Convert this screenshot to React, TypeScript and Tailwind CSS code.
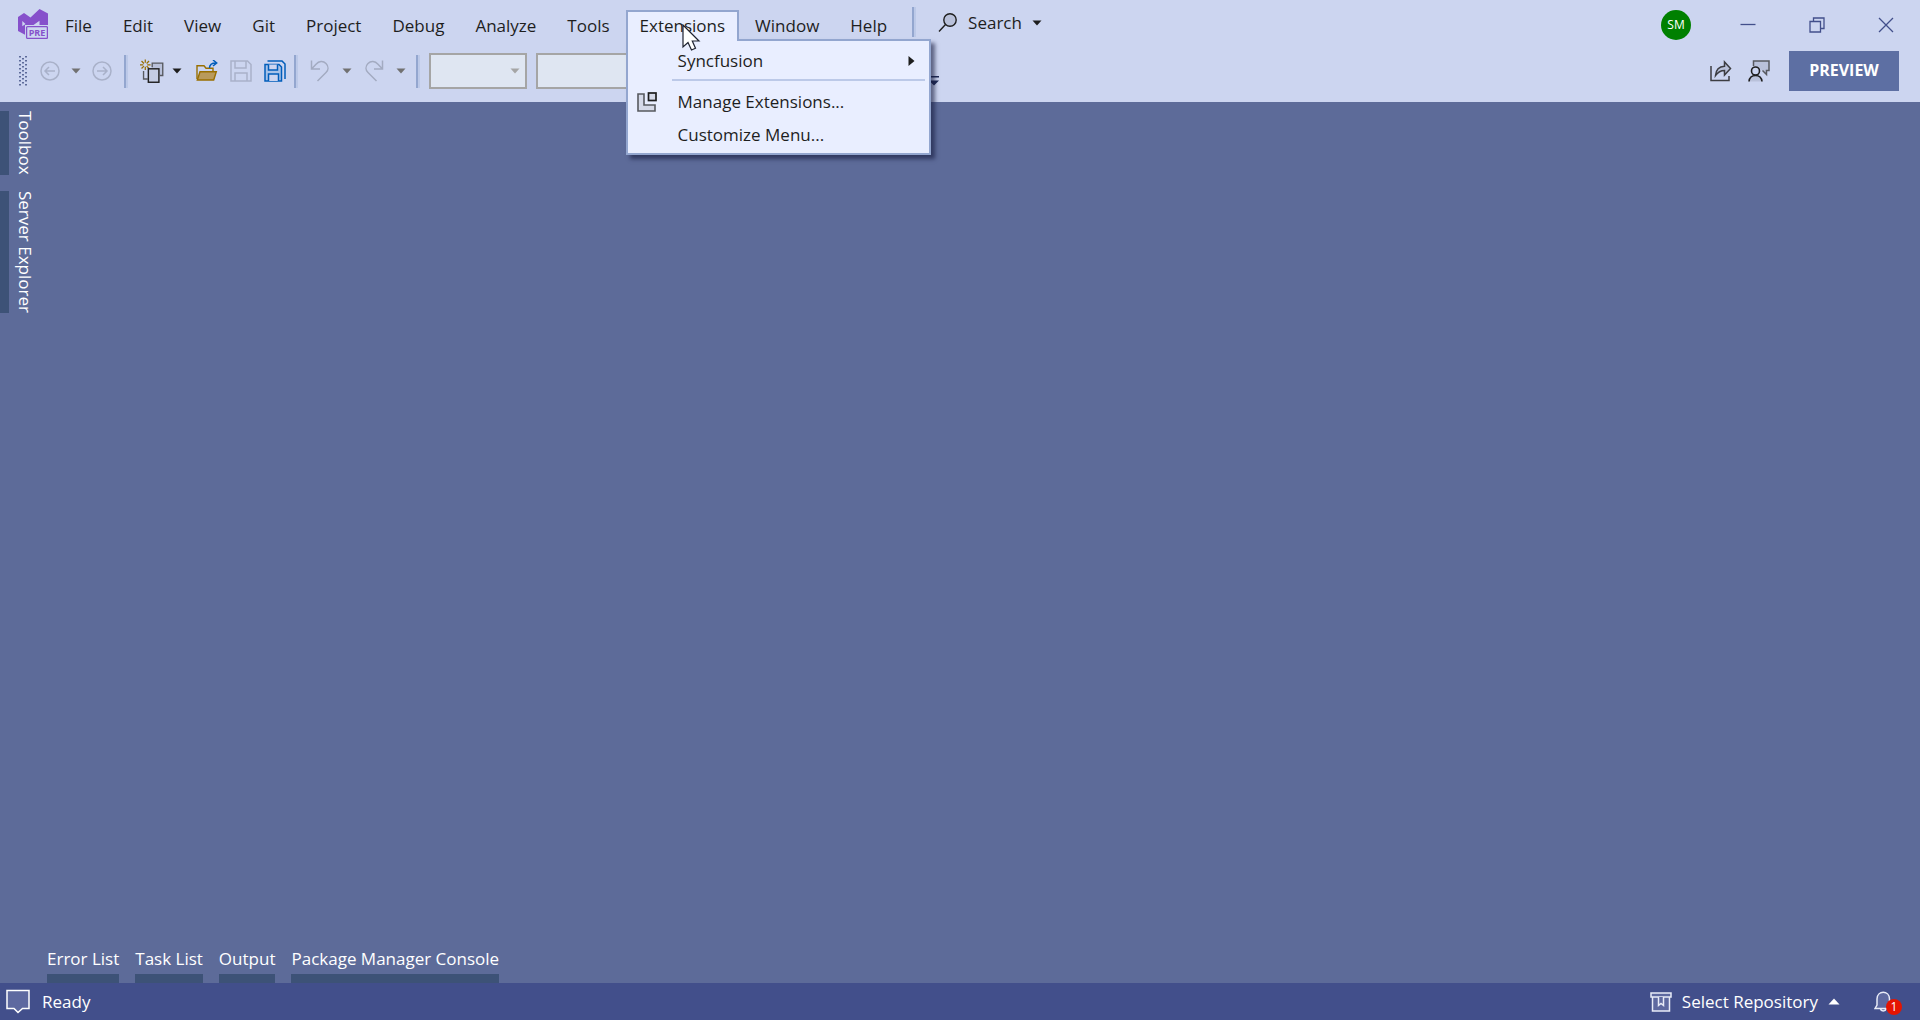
import React from "react";

const menuBefore = ["File", "Edit", "View", "Git", "Project", "Debug", "Analyze", "Tools"];
const bottomTabs = ["Error List", "Task List", "Output", "Package Manager Console"];

function Caret({ className = "" }: { className?: string }) {
  return (
    <svg className={className} width="10" height="6" viewBox="0 0 10 6" fill="currentColor" aria-hidden="true">
      <path d="M0.5 0.5h9L5 5.5z" />
    </svg>
  );
}

function ToolButton({ label, className = "", children }: { label: string; className?: string; children: React.ReactNode }) {
  return (
    <button type="button" aria-label={label} className={`flex h-8 shrink-0 items-center justify-center ${className}`}>
      {children}
    </button>
  );
}

function Divider({ className = "" }: { className?: string }) {
  return <div className={`w-1 shrink-0 border-l-2 border-[#93a6cf] bg-[#bcc9e8] ${className}`} />;
}

function Logo() {
  return (
    <svg width="30" height="30" viewBox="0 0 30 30" aria-label="Visual Studio Preview" role="img" className="shrink-0">
      <path fill="#8650cb" d="M21.5 0 30 4.500V16H7.500v10L0 22V8L6 4l6.500 4.500z" />
      <path fill="#ccd5f0" d="M4.300 12v5.300L7.500 15zM15.500 16l6-4.200V16z" />
      <rect x="7" y="16" width="23" height="14" fill="#ccd5f0" />
      <rect x="8.600" y="17.600" width="20.800" height="11.800" rx="1" fill="#ccd5f0" stroke="#8650cb" strokeWidth="1.300" />
      <text x="19" y="26.800" textAnchor="middle" fontSize="9" fontWeight="700" fontFamily="Open Sans, sans-serif" fill="#8650cb">PRE</text>
    </svg>
  );
}

function Grip() {
  const rows = Array.from({ length: 15 }, (_, i) => i);
  return (
    <svg width="10" height="30" viewBox="0 0 10 30" fill="#5d6b99" aria-hidden="true" className="shrink-0">
      {rows.map((r) =>
        r % 2 === 0 ? (
          <g key={r}>
            <rect x="1" y={r * 2} width="2" height="1.5" />
            <rect x="7" y={r * 2} width="2" height="1.5" />
          </g>
        ) : (
          <rect key={r} x="4" y={r * 2} width="2" height="1.5" />
        )
      )}
    </svg>
  );
}

function CircleArrow({ flip = false }: { flip?: boolean }) {
  return (
    <svg width="20" height="20" viewBox="0 0 20 20" fill="none" stroke="#a9b1c9" strokeWidth="1.5" aria-hidden="true">
      <circle cx="10" cy="10" r="9" />
      <path d={flip ? "M5 10h10M11 6l4 4-4 4" : "M15 10H5M9 6l-4 4 4 4"} />
    </svg>
  );
}

function NewProjectIcon() {
  return (
    <svg width="25" height="25" viewBox="0 0 25 25" fill="none" aria-hidden="true">
      <path stroke="#996f00" strokeWidth="1.3" d="M5.5 0v3.5M5.5 7.5V11M0 5.5h3.5M7.5 5.5H11M1.6 1.6l2.5 2.5M6.9 6.9l2.5 2.5M9.4 1.6 6.9 4.1M4.1 6.9 1.6 9.4" />
      <path stroke="#57595f" strokeWidth="1.4" d="M12.7 8V3.7h11v13h-3" fill="#b9c1da" />
      <path stroke="#57595f" strokeWidth="1.4" d="M8 20.3H3.7V12" />
      <rect x="8.7" y="9.7" width="11" height="14" fill="#c5cde4" stroke="#212121" strokeWidth="1.5" />
    </svg>
  );
}

function OpenFolderIcon() {
  return (
    <svg width="22" height="22" viewBox="0 0 22 22" fill="none" aria-hidden="true">
      <path d="M1 19V5.7h7l2 2.5h7v3" stroke="#996f00" strokeWidth="1.4" />
      <path d="M4 11.7h16.3L17.7 20H1.3z" fill="#b99a5b" stroke="#996f00" strokeWidth="1.4" />
      <path d="M13.5 8c0-3.5 2-5 6.5-5M17 0l3.7 3L17 6" stroke="#005dba" strokeWidth="1.5" />
    </svg>
  );
}

function SaveIcon() {
  return (
    <svg width="22" height="22" viewBox="0 0 22 22" fill="none" stroke="#a9b1c9" strokeWidth="1.5" aria-hidden="true">
      <path d="M1 1h16.5L21 4.5V21H1zM5 1v7h11V1M5 21v-8h12v8" />
    </svg>
  );
}

function SaveAllIcon() {
  return (
    <svg width="22" height="22" viewBox="0 0 22 22" fill="none" stroke="#005dba" strokeWidth="1.5" aria-hidden="true">
      <path d="M3.5 1H18l3 3v15" />
      <path d="M1 4.5h14L17.5 7v14H1z" fill="#a9c3e8" />
      <path d="M4.5 4.5V10h9V4.5M4.5 21v-7h10v7" fill="#ccd5f0" />
    </svg>
  );
}

function UndoIcon({ flip = false }: { flip?: boolean }) {
  return (
    <svg width="20" height="22" viewBox="0 0 20 22" fill="none" stroke="#a3abc1" strokeWidth="1.5" aria-hidden="true">
      <path
        d={
          flip
            ? "M18.5 0.500v8.500H10M18.5 9 14 4.200C11 1 7 .5 4 3.500c-2.800 2.800-2.500 6.500 0 9L12.500 21"
            : "M1.500 0.500v8.500H10M1.500 9 6 4.200C9 1 13 .5 16 3.500c2.800 2.800 2.500 6.500 0 9L7.500 21"
        }
      />
    </svg>
  );
}

function SearchIcon() {
  return (
    <svg width="20" height="20" viewBox="0 0 20 20" fill="none" stroke="#1e1e1e" strokeWidth="1.4" aria-hidden="true">
      <circle cx="12" cy="7" r="6.200" fill="#b9c1da" />
      <path d="M7.500 11.500 1 18.500" />
    </svg>
  );
}

function ShareIcon() {
  return (
    <svg width="22" height="22" viewBox="0 0 22 22" fill="none" stroke="#3c3d42" strokeWidth="1.5" aria-hidden="true">
      <path d="M1 6v14.500h18V16" />
      <path d="M5.500 15.500C6 9 9 6.500 14.500 6.200V2l6 6.500-6 6.500v-4.500c-4 0-6.500 1.500-9 5z" fill="#b9c1da" />
    </svg>
  );
}

function FeedbackIcon() {
  return (
    <svg width="22" height="22" viewBox="0 0 22 22" fill="none" aria-hidden="true">
      <path d="M5.500 6V1h15.500v9.500h-2.500V14.500L14.500 10.500" fill="#b9c1da" stroke="#57595f" strokeWidth="1.500" />
      <circle cx="7.500" cy="11" r="4" fill="#ccd5f0" stroke="#1e1e1e" strokeWidth="1.600" />
      <path d="M1 21.500c.5-4.500 3-6 6.500-6s6 1.500 6.500 6" fill="#b9c1da" stroke="#1e1e1e" strokeWidth="1.600" />
    </svg>
  );
}

function ExtensionsMenu() {
  return (
    <div
      role="menu"
      className="absolute left-0 top-[29px] z-20 flex w-[305px] flex-col border-2 border-[#93a6cf] bg-[#e9eeff] pb-[2px] pt-1 shadow-[4px_4px_4px_rgba(20,25,60,0.6)]"
    >
      <button type="button" role="menuitem" className="flex h-8 items-center justify-between pl-[50px] pr-[14px] text-left">
        <span>Syncfusion</span>
        <svg width="7" height="10" viewBox="0 0 7 10" fill="#1e1e1e" aria-hidden="true">
          <path d="M0.500 0l6 5-6 5z" />
        </svg>
      </button>
      <div className="mb-1 ml-11 mr-1 mt-[2px] h-[2px] bg-[#bcc9e8]" />
      <button type="button" role="menuitem" className="flex h-[33px] items-center text-left">
        <span className="flex w-[50px] pl-[9px]">
          <svg width="20" height="20" viewBox="0 0 20 20" fill="none" aria-hidden="true">
            <path d="M1 2h6v11h11v6H1z" fill="#d5d9e8" stroke="#57595f" strokeWidth="1.600" />
            <rect x="11.500" y="1" width="7.500" height="7.500" fill="#d5d9e8" stroke="#1e1e1e" strokeWidth="1.700" />
          </svg>
        </span>
        Manage Extensions...
      </button>
      <button type="button" role="menuitem" className="flex h-[33px] items-center pl-[50px] text-left">
        Customize Menu...
      </button>
    </div>
  );
}

function MenuBar() {
  return (
    <div className="flex h-[50px] items-start pl-[18px]">
      <div className="pt-[9px]">
        <Logo />
      </div>
      <nav className="ml-[2px] flex gap-px pt-[10px]" aria-label="Main menu">
        {menuBefore.map((m) => (
          <button key={m} type="button" className="h-8 px-[15px]">
            {m}
          </button>
        ))}
        <div className="relative">
          <button
            type="button"
            aria-expanded="true"
            className="relative z-30 block h-[31px] border-2 border-b-0 border-[#93a6cf] bg-[#e9eeff] px-3 pb-px"
          >
            Extensions
          </button>
          <ExtensionsMenu />
          <svg width="19" height="28" viewBox="0 0 19 28" className="pointer-events-none absolute left-[56px] top-[14px] z-40" aria-hidden="true">
            <path d="M1 1v22l5-4.500 3.500 7.500 4-1.800L10.300 17H17z" fill="#fff" stroke="#1e2230" strokeWidth="1.200" />
          </svg>
        </div>
        <button type="button" className="h-8 px-[15px]">Window</button>
        <button type="button" className="h-8 px-[15px]">Help</button>
      </nav>
      <Divider className="ml-[10px] mt-[7px] h-[30px]" />
      <button type="button" className="ml-[22px] flex h-[46px] items-center gap-[10px]">
        <SearchIcon />
        Search
        <Caret className="text-[#1e1e1e]" />
      </button>
      <div className="ml-auto flex h-[50px] items-center">
        <span className="mr-[22px] flex h-[30px] w-[30px] items-center justify-center rounded-full bg-[#008000] text-[12px] text-white">SM</span>
        <button type="button" aria-label="Minimize" className="flex h-[50px] w-[69px] items-center justify-center">
          <svg width="16" height="16" viewBox="0 0 16 16" stroke="#424f8b" strokeWidth="1.300"><path d="M0.500 7.500h15" /></svg>
        </button>
        <button type="button" aria-label="Restore" className="flex h-[50px] w-[69px] items-center justify-center">
          <svg width="16" height="16" viewBox="0 0 16 16" fill="none" stroke="#424f8b" strokeWidth="1.300"><path d="M1 4.500h10.500V15H1zM4.500 4V1H15v10.500h-3" /></svg>
        </button>
        <button type="button" aria-label="Close" className="flex h-[50px] w-[69px] items-center justify-center">
          <svg width="16" height="16" viewBox="0 0 16 16" stroke="#424f8b" strokeWidth="1.300"><path d="M1 1l14 14M15 1 1 15" /></svg>
        </button>
      </div>
    </div>
  );
}

function Toolbar() {
  return (
    <div className="flex h-[52px] items-center pb-[10px] pl-[18px] pr-[21px] pt-0">
      <Grip />
      <ToolButton label="Navigate backward" className="ml-[10px] w-6"><CircleArrow /></ToolButton>
      <ToolButton label="Backward history" className="w-7 text-[#717171]"><Caret /></ToolButton>
      <ToolButton label="Navigate forward" className="w-6"><CircleArrow flip /></ToolButton>
      <Divider className="ml-[10px] h-[33px]" />
      <ToolButton label="New project" className="ml-3 w-6"><NewProjectIcon /></ToolButton>
      <ToolButton label="New project options" className="w-[26px] text-[#1e1e1e]"><Caret /></ToolButton>
      <ToolButton label="Open file" className="w-[34px]"><OpenFolderIcon /></ToolButton>
      <ToolButton label="Save" className="w-[34px]"><SaveIcon /></ToolButton>
      <ToolButton label="Save all" className="w-[34px]"><SaveAllIcon /></ToolButton>
      <Divider className="ml-[2px] h-[33px]" />
      <ToolButton label="Undo" className="ml-[10px] w-6"><UndoIcon /></ToolButton>
      <ToolButton label="Undo history" className="w-[30px] text-[#717171]"><Caret /></ToolButton>
      <ToolButton label="Redo" className="w-6"><UndoIcon flip /></ToolButton>
      <ToolButton label="Redo history" className="w-[30px] text-[#717171]"><Caret /></ToolButton>
      <Divider className="h-[33px]" />
      <Combo label="Solution configuration" className="ml-[9px] w-[98px]" />
      <Combo label="Solution platform" className="ml-[9px] w-[170px]" />
      <ToolButton label="Toolbar options" className="ml-[222px] w-3 pt-5 text-[#1e2a55]">
        <svg width="12" height="10" viewBox="0 0 12 10" fill="currentColor" aria-hidden="true">
          <path d="M1 0h10v1.500H1zM1 4.500h10L6 9.500z" />
        </svg>
      </ToolButton>
      <div className="ml-auto flex items-center">
        <ToolButton label="Share" className="w-[38px]"><ShareIcon /></ToolButton>
        <ToolButton label="Send feedback" className="w-[38px]"><FeedbackIcon /></ToolButton>
        <button type="button" className="ml-[11px] h-10 w-[110px] bg-[#5d6fa3] pb-[2px] text-[16px] font-bold text-white">PREVIEW</button>
      </div>
    </div>
  );
}

function Combo({ label, className = "" }: { label: string; className?: string }) {
  return (
    <div className={`relative h-9 shrink-0 ${className}`}>
      <select aria-label={label} className="h-9 w-full appearance-none border-2 border-[#a5a5a5] bg-[#dfe6f2]" />
      <Caret className="pointer-events-none absolute right-[7px] top-[15px] text-[#a5a5a5]" />
    </div>
  );
}

export default function App() {
  return (
    <div className="flex min-h-screen flex-col bg-[#5d6b99] font-['Open_Sans','Noto_Sans',sans-serif] text-[17px] leading-6 text-[#1e1e1e]">
      <header className="bg-[#ccd5f0]">
        <MenuBar />
        <Toolbar />
      </header>
      <main className="flex flex-1 flex-col justify-between text-white">
        <div className="flex flex-col items-start gap-4 pt-[9px]">
          {["Toolbox", "Server Explorer"].map((t) => (
            <button key={t} type="button" className="border-l-[9px] border-[#3d5277] pl-1 [writing-mode:vertical-rl]">
              {t}
            </button>
          ))}
        </div>
        <div className="flex gap-4 pl-[47px]">
          {bottomTabs.map((t) => (
            <button key={t} type="button" className="border-b-[9px] border-[#3d5277] pb-[3px]">
              {t}
            </button>
          ))}
        </div>
      </main>
      <footer className="flex h-[37px] items-center bg-[#424f8b] pl-[6px] pr-[18px] text-white">
        <svg width="24" height="25" viewBox="0 0 24 25" fill="#5e69a0" stroke="#fff" strokeWidth="1.500" aria-hidden="true">
          <path d="M1 1.500h22v18h-6.500L12 23.500 8 19.500H1z" />
        </svg>
        <span className="ml-3">Ready</span>
        <button type="button" className="ml-auto flex items-center gap-[10px]">
          <svg width="22" height="20" viewBox="0 0 22 20" fill="#5e69a0" stroke="#e8ebf7" strokeWidth="1.500" aria-hidden="true">
            <path d="M2.500 5v14h17V5" />
            <path d="M1 1h20v4H1z" />
            <path d="M8.500 5v8.500l2.500-2 2.500 2V5" />
          </svg>
          Select Repository
          <svg width="12" height="7" viewBox="0 0 12 7" fill="currentColor" aria-hidden="true">
            <path d="M0.500 6.500h11L6 0.500z" />
          </svg>
        </button>
        <button type="button" aria-label="Notifications" className="relative ml-[34px] h-[26px] w-7">
          <svg width="20" height="22" viewBox="0 0 20 22" fill="#5e69a0" stroke="#e8ebf7" strokeWidth="1.500" aria-hidden="true">
            <path d="M1 17.500 3 14V8c0-9 12.500-9 12.500 0v6l2 3.500zM6.500 18c.5 2.500 5 2.500 5.500 0" />
          </svg>
          <span className="absolute bottom-0 right-0 flex h-4 w-4 items-center justify-center rounded-full bg-[#e51400] text-[12px] leading-4">1</span>
        </button>
      </footer>
    </div>
  );
}
